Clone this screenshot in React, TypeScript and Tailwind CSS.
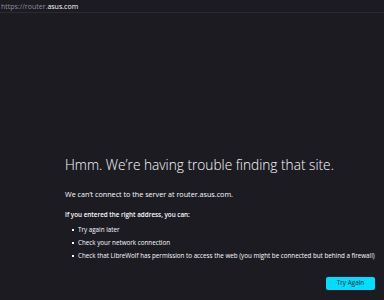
export default function App() {
  return (
    <div className="w-[384px] h-[300px] bg-[#1c1b22] text-[#fbfbfe] overflow-hidden flex flex-col" style={{ fontFamily: '"Open Sans", "Noto Sans", sans-serif' }}>
      {/* 주소창 */}
      <div className="h-[13px] shrink-0 bg-[#1c1b22] border-b border-[#2b2a33] px-[1px] flex items-center text-[7px] leading-none">
        <span className="text-[#8f8f9d]">https://router.</span>
        <span className="text-[#fbfbfe]">asus.com</span>
      </div>

      <div className="flex-1 pl-[65px] pr-[6px] pt-[144px]">
        <h1 className="text-[13.7px] font-light leading-[16px] text-[#fbfbfe] whitespace-nowrap">
          Hmm. We’re having trouble finding that site.
        </h1>
        <p className="mt-[17px] text-[7.2px] leading-[9px] whitespace-nowrap">We can’t connect to the server at router.asus.com.</p>
        <p className="mt-[12px] text-[6.3px] font-semibold leading-[8px] whitespace-nowrap">If you entered the right address, you can:</p>
        <ul className="mt-[7px] pl-[7px] flex flex-col gap-[5px] text-[6.25px] leading-[8px]">
          <li className="flex items-center gap-[4px]"><span className="shrink-0 w-[2px] h-[2px] bg-[#fbfbfe]" />Try again later</li>
          <li className="flex items-center gap-[4px]"><span className="shrink-0 w-[2px] h-[2px] bg-[#fbfbfe]" />Check your network connection</li>
          <li className="flex items-center gap-[4px] whitespace-nowrap"><span className="shrink-0 w-[2px] h-[2px] bg-[#fbfbfe]" />Check that LibreWolf has permission to access the web (you might be connected but behind a firewall)</li>
        </ul>
        <div className="mt-[17px] pr-[3px] flex justify-end">
          <button className="w-[49px] h-[13px] rounded-[2px] bg-[#00ddff] text-[#15141a] text-[6.4px] leading-none font-medium">Try Again</button>
        </div>
      </div>
    </div>
  );
}
